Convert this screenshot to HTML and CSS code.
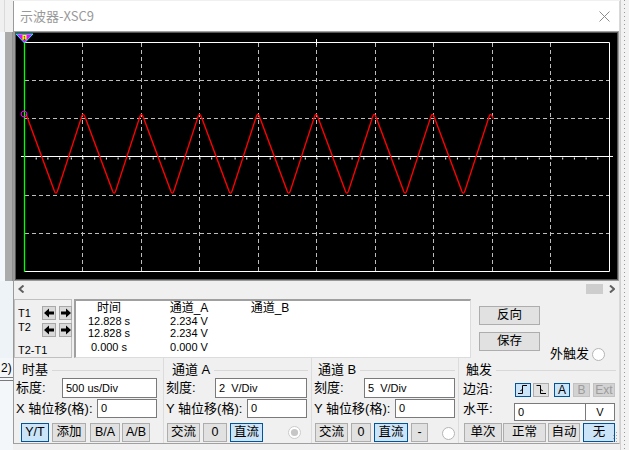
FILE: index.html
```html
<!DOCTYPE html>
<html>
<head>
<meta charset="utf-8">
<link rel="stylesheet" href="styles.css">
</head>
<body>
<div class="bg-left">
  <div class="bl-top"></div>
  <div class="bl-mid"></div>
  <div class="bl-low"></div>
  <div class="bl-bot"><span class="bl-text">2)</span><div class="bl-line"></div><div class="bl-line"></div></div>
</div>

<div class="window">
  <div class="titlebar">
    <span class="title">示波器-XSC9</span>
    <svg class="close" width="11" height="11" viewBox="0 0 11 11"><path d="M0.5 0.5L10.5 10.5M10.5 0.5L0.5 10.5" stroke="#8c8c8c" stroke-width="1"/></svg>
  </div>

  <div class="screen-frame">
    <div class="screen">
      <svg class="scope" width="601" height="246" viewBox="16 33 601 246">
        <g stroke="#bdbdbd" stroke-width="1" stroke-dasharray="4 3" fill="none">
          <path d="M82.5 43V271M141.5 43V271M199.5 43V271M258.5 43V271M316.5 43V271M375.5 43V271M433.5 43V271M492.5 43V271M550.5 43V271"/>
          <path d="M25 80.5H609M25 118.5H609M25 195.5H609M25 233.5H609"/>
        </g>
        <path d="M24 42.5H609.5V271.5H24" fill="none" stroke="#ffffff" stroke-width="1"/>
        <path d="M21 156.5H613" stroke="#ffffff" stroke-width="1.2"/>
        <path d="M35.7 158.5H609" stroke="#ffffff" stroke-width="2" stroke-dasharray="1 10.7"/>
        <path d="M316.5 39V45" stroke="#ffffff" stroke-width="1"/>
        <path d="M26,114 L54,190.1 Q56,196.5 58,189.4 L81.2,118.1 Q83.2,111 85.2,117.4 L112.2,190.1 Q114.2,196.5 116.2,189.4 L139.4,118.1 Q141.4,111 143.4,117.4 L170.4,190.1 Q172.4,196.5 174.4,189.4 L197.6,118.1 Q199.6,111 201.6,117.4 L228.6,190.1 Q230.6,196.5 232.6,189.4 L255.8,118.1 Q257.8,111 259.8,117.4 L286.8,190.1 Q288.8,196.5 290.8,189.4 L314,118.1 Q316,111 318,117.4 L345,190.1 Q347,196.5 349,189.4 L372.2,118.1 Q374.2,111 376.2,117.4 L403.2,190.1 Q405.2,196.5 407.2,189.4 L430.4,118.1 Q432.4,111 434.4,117.4 L461.4,190.1 Q463.4,196.5 465.4,189.4 L488.6,118.1 Q490.6,111 492.6,117.4 L493.2,118.6" fill="none" stroke="#ff0000" stroke-width="1.4" stroke-linejoin="round"/>
        <line x1="24.5" y1="42" x2="24.5" y2="272" stroke="#00ff00" stroke-width="1.3"/>
        <circle cx="24" cy="114" r="2.9" fill="none" stroke="#ff00ff" stroke-width="1"/>
        <polygon points="16,34 33,34 24.5,43" fill="#ff00ff" stroke="#00ffff" stroke-width="1"/>
        <rect x="22.5" y="35" width="4" height="5" fill="#ffff00"/>
        <text x="24.5" y="39.6" font-size="5" text-anchor="middle" fill="#000000" font-family="Liberation Sans">1</text>
      </svg>
    </div>
  </div>

  <div class="hscroll">
    <svg class="chev" width="7" height="8" viewBox="0 0 7 8"><path d="M5.5 0.5L1.5 4L5.5 7.5" fill="none" stroke="#606060" stroke-width="2"/></svg>
    <span class="thumb"></span>
    <svg class="chev chev-r" width="6" height="8" viewBox="0 0 6 8"><path d="M1 0.5L5 4L1 7.5" fill="none" stroke="#606060" stroke-width="2"/></svg>
  </div>

  <div class="readout-row">
    <div class="tbox">
      <span class="tlabel t1">T1</span>
      <span class="abtn"><svg width="10" height="10" viewBox="0 0 10 10"><polygon points="0,5 5,0.5 5,3.5 10,3.5 10,6.5 5,6.5 5,9.5" fill="#000"/></svg></span>
      <span class="abtn"><svg width="10" height="10" viewBox="0 0 10 10"><polygon points="10,5 5,0.5 5,3.5 0,3.5 0,6.5 5,6.5 5,9.5" fill="#000"/></svg></span>
      <span class="tlabel t2">T2</span>
      <span class="abtn"><svg width="10" height="10" viewBox="0 0 10 10"><polygon points="0,5 5,0.5 5,3.5 10,3.5 10,6.5 5,6.5 5,9.5" fill="#000"/></svg></span>
      <span class="abtn"><svg width="10" height="10" viewBox="0 0 10 10"><polygon points="10,5 5,0.5 5,3.5 0,3.5 0,6.5 5,6.5 5,9.5" fill="#000"/></svg></span>
      <span class="tlabel t3">T2-T1</span>
    </div>
    <div class="readout">
      <span class="rh">时间</span><span class="rh">通道_A</span><span class="rh">通道_B</span>
      <span class="rv">12.828 s</span><span class="rv">2.234 V</span><span class="rv"></span>
      <span class="rv">12.828 s</span><span class="rv">2.234 V</span><span class="rv"></span>
      <span class="rv">0.000 s</span><span class="rv">0.000 V</span><span class="rv"></span>
    </div>
    <div class="rbtns">
      <span class="btn pbtn">反向</span>
      <span class="btn pbtn">保存</span>
    </div>
    <div class="ext">
      <span class="ext-text">外触发</span>
      <svg width="13" height="13" viewBox="0 0 13 13"><circle cx="6.5" cy="6.5" r="6" fill="#fff" stroke="#b4b4b4"/></svg>
    </div>
  </div>

  <div class="groups">
    <div class="grp g1">
      <div class="legend"><span class="lg-text">时基</span><span class="lg-line"></span></div>
      <div class="row"><span class="lbl l-scale1">标度:</span><span class="inp tall i-scale1">500 us/Div</span></div>
      <div class="row"><span class="lbl l-off">X 轴位移(格):</span><span class="inp i-off">0</span></div>
      <div class="btnrow">
        <span class="btn on b-yt">Y/T</span>
        <span class="btn b-add">添加</span>
        <span class="btn b-ba">B/A</span>
        <span class="btn b-ab">A/B</span>
      </div>
    </div>

    <div class="grp g2">
      <div class="legend"><span class="lg-text">通道 A</span><span class="lg-line"></span></div>
      <div class="row"><span class="lbl l-scale2">刻度:</span><span class="inp tall i-scale2">2  V/Div</span></div>
      <div class="row"><span class="lbl l-off">Y 轴位移(格):</span><span class="inp i-off">0</span></div>
      <div class="btnrow">
        <span class="btn b-ac">交流</span>
        <span class="btn b-zero-a">0</span>
        <span class="btn on b-dc">直流</span>
        <svg class="radio radio-a" width="13" height="13" viewBox="0 0 13 13"><circle cx="6.5" cy="6.5" r="6" fill="#fff" stroke="#cbcbcb"/><circle cx="6.5" cy="6.5" r="3.6" fill="#c6c6c6"/></svg>
      </div>
    </div>

    <div class="grp g3">
      <div class="legend"><span class="lg-text">通道 B</span><span class="lg-line"></span></div>
      <div class="row"><span class="lbl l-scale3">刻度:</span><span class="inp tall i-scale3">5  V/Div</span></div>
      <div class="row"><span class="lbl l-off">Y 轴位移(格):</span><span class="inp i-off">0</span></div>
      <div class="btnrow">
        <span class="btn b-ac">交流</span>
        <span class="btn b-zero-b">0</span>
        <span class="btn on b-dc b-dc-b">直流</span>
        <span class="btn b-minus">-</span>
        <svg class="radio radio-b" width="13" height="13" viewBox="0 0 13 13"><circle cx="6.5" cy="6.5" r="6" fill="#fff" stroke="#b4b4b4"/></svg>
      </div>
    </div>

    <div class="grp g4">
      <div class="legend"><span class="lg-text">触发</span><span class="lg-line"></span></div>
      <div class="row row-edge"><span class="lbl l-edge">边沿:</span>
        <span class="btn sbtn on e-rise"><svg width="14" height="12" viewBox="0 0 14 12"><path d="M2 9.5H6.5V1.5H11M4.3 6.8L6.5 5.5" fill="none" stroke="#000" stroke-width="1"/></svg></span>
        <span class="btn sbtn e-fall"><svg width="14" height="12" viewBox="0 0 14 12"><path d="M2.5 1.5H6.5V9.5H12M6.5 5.5L8.8 6.8" fill="none" stroke="#000" stroke-width="1"/></svg></span>
        <span class="btn sbtn on e-a">A</span>
        <span class="btn sbtn dis e-b">B</span>
        <span class="btn sbtn dis e-ext">Ext</span>
      </div>
      <div class="row row-lvl"><span class="lbl l-lvl">水平:</span><span class="inp lvl">0</span><span class="inp unit">V</span></div>
      <div class="btnrow">
        <span class="btn t-single">单次</span>
        <span class="btn t-normal">正常</span>
        <span class="btn t-auto">自动</span>
        <span class="btn on t-none">无</span>
      </div>
    </div>
  </div>

  <svg class="grip" width="6" height="10" viewBox="0 0 6 10"><g fill="#a8a8a8"><rect x="4" y="0" width="1" height="1"/><rect x="4" y="3" width="1" height="1"/><rect x="1" y="3" width="1" height="1"/><rect x="4" y="6" width="1" height="1"/><rect x="1" y="6" width="1" height="1"/><rect x="4" y="9" width="1" height="1"/><rect x="1" y="9" width="1" height="1"/></g></svg>
</div>

<div class="bg-right"><div class="dots"></div></div>
</body>
</html>
```

FILE: styles.css
```css
* { box-sizing: border-box; }
html, body { margin: 0; padding: 0; }
body {
  width: 629px;
  height: 450px;
  overflow: hidden;
  background: #f0f0f0;
  display: flex;
  align-items: flex-start;
  font-family: "Liberation Sans", "Noto Sans CJK SC", sans-serif;
  font-size: 13px;
  color: #000;
}

/* background app strips */
.bg-left { width: 13px; height: 450px; flex: none; display: flex; flex-direction: column; }
.bl-top { height: 32px; background: linear-gradient(to right, #f0f0f0 0 4px, #dadada 4px 5px, #f0f0f0 5px); }
.bl-mid { height: 249px; background: linear-gradient(to right, #f4f8fc 0 5px, #ababab 5px 12px, #8f8f8f 12px); }
.bl-low { height: 77px; background: #eef3f8; }
.bl-bot { flex: 1; background: #f4f7fa; display: flex; flex-direction: column; }
.bl-text { font-size: 12px; line-height: 14px; margin-top: 3px; padding-left: 1px; }
.bl-line { height: 1px; background: #7a7a7a; margin-top: 2px; }

.bg-right { width: 9px; height: 450px; flex: none; background: #f2f2f2; border-left: 1px solid #d0d0d0; }
.dots { width: 1px; height: 100%; margin-left: 3px; background: repeating-linear-gradient(to bottom, #9a9a9a 0 1px, transparent 1px 4px); }

/* window */
.window {
  width: 607px;
  height: 443px;
  margin-top: 1px;
  flex: none;
  background: #f0f0f0;
  border-left: 1px solid #9a9a9a;
  border-right: 1px solid #d9d9d9;
  border-bottom: 1px solid #a0a0a0;
  display: flex;
  flex-direction: column;
  position: relative;
}
.titlebar {
  height: 31px;
  flex: none;
  background: #fff;
  border-bottom: 1px solid #a0a0a0;
  display: flex;
  align-items: center;
  padding-left: 6px;
  padding-right: 9px;
}
.title { font-family: "Noto Sans CJK SC", sans-serif; font-size: 13px; color: #999; line-height: 16px; }
.close { margin-left: auto; }

.screen-frame { height: 249px; flex: none; background: #999; padding: 0 1px 1px 1px; }
.screen { height: 248px; border: 1px solid #555; background: #000; }
.scope { display: block; }

.hscroll { height: 16px; flex: none; display: flex; align-items: center; padding: 0 4px; }
.chev { display: block; }
.thumb { width: 17px; height: 10px; background: #cdcdcd; margin-left: auto; }
.chev-r { margin-left: 6px; }

/* cursor readout */
.readout-row { height: 61px; flex: none; display: flex; align-items: flex-start; padding-top: 2px; }
.tbox {
  width: 58px;
  height: 59px;
  border: 1px solid #c0c0c0;
  display: grid;
  grid-template-columns: 21px 14px 13px;
  grid-template-rows: 14px 14px 14px;
  column-gap: 3px;
  row-gap: 3px;
  padding: 6px 0 0 3px;
}
.tlabel { font-size: 11px; line-height: 12px; white-space: nowrap; }
.t1 { align-self: start; margin-top: 1px; }
.t2 { align-self: start; margin-top: -2px; }
.t3 { grid-column: 1 / 4; margin-top: 4px; }
.abtn {
  background: #d9d9d9;
  border: 1px solid #a8a8a8;
  display: flex;
  align-items: center;
  justify-content: center;
}
.abtn svg { display: block; }

.readout {
  margin-left: 2px;
  width: 397px;
  height: 59px;
  background: #fff;
  border-top: 2px solid #a0a0a0;
  border-left: 2px solid #a0a0a0;
  border-right: 1px solid #dcdcdc;
  border-bottom: 1px solid #dcdcdc;
  display: grid;
  grid-template-columns: 66px 94px 68px;
  grid-template-rows: 14px 12px 12px 14px;
  align-content: start;
}
.rh { font-size: 12px; line-height: 14px; text-align: center; }
.rv { font-size: 11px; line-height: 12px; text-align: center; align-self: end; }

.rbtns { margin-left: 8px; margin-top: 7px; display: flex; flex-direction: column; gap: 7px; }
.pbtn { width: 61px; height: 21px; font-size: 13px; }

.ext { margin-left: 10px; margin-top: 48px; display: flex; align-items: center; height: 14px; }
.ext-text { font-size: 13px; line-height: 14px; }
.ext svg { margin-left: 3px; display: block; }

/* bottom groups */
.groups { height: 85px; flex: none; display: flex; }
.grp { display: flex; flex-direction: column; }
.grp + .grp { border-left: 1px solid #dcdcdc; }
.g1 { width: 149px; }
.g2 { width: 148px; }
.g3 { width: 147px; }
.g4 { flex: 1; }

.legend { height: 14px; margin-top: 5px; display: flex; align-items: center; }
.lg-text { font-size: 13px; line-height: 14px; white-space: nowrap; }
.lg-line { flex: 1; height: 1px; background: #d8d8d8; margin: 1px 3px 0 4px; }

.row { height: 21px; display: flex; align-items: center; }
.lbl { font-size: 13px; line-height: 14px; white-space: nowrap; flex: none; }
.inp {
  height: 19px;
  background: #fff;
  border: 1px solid #7a7a7a;
  font-size: 11px;
  line-height: 17px;
  padding-left: 3px;
  white-space: pre;
  flex: none;
}
.inp.tall { height: 20px; line-height: 18px; }
.row-edge { align-items: flex-start; }
.row-edge .lbl { align-self: center; margin-top: 2px; }
.row-lvl { align-items: flex-start; }
.row-lvl .lbl { align-self: center; }
.lvl, .unit { height: 18px; margin-top: 5px; line-height: 16px; }
.lvl { width: 72px; }
.unit { width: 29px; padding-left: 0; text-align: center; border-left: none; }

/* label / input widths */
.l-scale1 { width: 46px; }
.l-scale2 { width: 49px; }
.l-scale3 { width: 50px; }
.l-off { width: 81px; }
.l-edge { width: 52px; }
.l-lvl { width: 51px; }
.i-scale1 { width: 95px; }
.i-scale2 { width: 92px; }
.i-scale3 { width: 91px; }
.i-off { width: 60px; }

.btnrow { height: 19px; margin-top: 4px; display: flex; align-items: center; }

.g1 .legend { padding-left: 8px; }
.g1 .row { padding-left: 2px; }
.g1 .btnrow { padding-left: 7px; }
.g2 .legend { padding-left: 8px; }
.g2 .row { padding-left: 2px; }
.g2 .btnrow { padding-left: 3px; }
.g3 .legend { padding-left: 6px; }
.g3 .row { padding-left: 2px; }
.g3 .btnrow { padding-left: 3px; }
.g4 .legend { padding-left: 7px; }
.g4 .row { padding-left: 4px; }
.g4 .btnrow { padding-left: 5px; }

.btn {
  height: 19px;
  background: #e1e1e1;
  border: 1px solid #adadad;
  font-size: 12.5px;
  line-height: 17px;
  text-align: center;
  white-space: nowrap;
  display: flex;
  align-items: center;
  justify-content: center;
  flex: none;
}
.btn.on { background: #cce4f7; border-color: #005499; }
.btn.dis { background: #d2d2d2; border-color: #c2c2c2; color: #9c9c9c; }
.sbtn { height: 14px; margin-top: 6px; font-size: 12px; }
.sbtn svg { display: block; }
.radio { display: block; flex: none; }

/* button widths and spacing */
.b-yt { width: 28px; }
.b-add { width: 34px; margin-left: 3px; }
.b-ba { width: 30px; margin-left: 4px; }
.b-ab { width: 28px; margin-left: 2px; }
.b-ac { width: 33px; }
.b-zero-a { width: 24px; margin-left: 3px; }
.b-zero-b { width: 20px; margin-left: 3px; }
.b-dc { width: 33px; margin-left: 3px; }
.b-dc-b { width: 34px; }
.b-minus { width: 17px; margin-left: 3px; }
.radio-a { margin-left: 25px; }
.radio-b { margin-left: 14px; margin-top: 2px; }
.e-rise { width: 16px; }
.e-fall { width: 16px; margin-left: 2px; }
.e-a { width: 16px; margin-left: 5px; }
.e-b { width: 17px; margin-left: 3px; }
.e-ext { width: 22px; margin-left: 3px; }
.t-single { width: 38px; }
.t-normal { width: 43px; margin-left: 1px; }
.t-auto { width: 32px; margin-left: 2px; }
.t-none { width: 32px; margin-left: 3px; }

.grip { position: absolute; right: 1px; bottom: 1px; }
```
